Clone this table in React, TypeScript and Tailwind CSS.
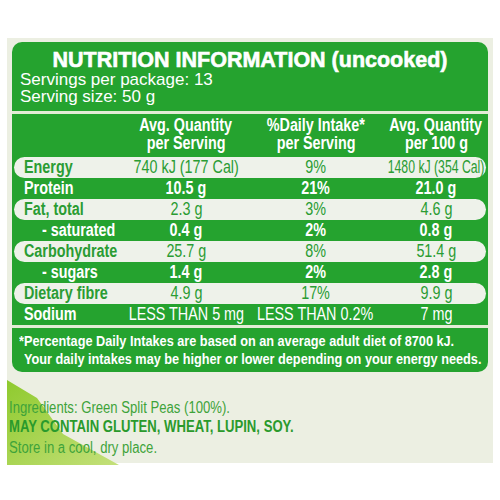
type Row = { label: string; a: string; b: string; c: string; indent?: boolean };

const rows: Row[] = [
  { label: "Energy", a: "740 kJ (177 Cal)", b: "9%", c: "1480 kJ (354 Cal)" },
  { label: "Protein", a: "10.5 g", b: "21%", c: "21.0 g" },
  { label: "Fat, total", a: "2.3 g", b: "3%", c: "4.6 g" },
  { label: "- saturated", a: "0.4 g", b: "2%", c: "0.8 g", indent: true },
  { label: "Carbohydrate", a: "25.7 g", b: "8%", c: "51.4 g" },
  { label: "- sugars", a: "1.4 g", b: "2%", c: "2.8 g", indent: true },
  { label: "Dietary fibre", a: "4.9 g", b: "17%", c: "9.9 g" },
];

// condensed look: Liberation Sans squeezed horizontally (no narrow face installed)
function Cond({ children, left, tight }: { children: React.ReactNode; left?: boolean; tight?: boolean }) {
  return (
    <span
      className={`inline-block whitespace-nowrap ${tight ? "scale-x-[0.7]" : "scale-x-[0.82]"} ${left ? "origin-left" : "origin-center"}`}
    >
      {children}
    </span>
  );
}

const cols = "grid grid-cols-[110px_124px_136px_104px] items-center";

function Cell({ children, tight }: { children: React.ReactNode; tight?: boolean }) {
  return (
    <div className="flex justify-center">
      <Cond tight={tight}>{children}</Cond>
    </div>
  );
}

function NutritionRow({ row, light }: { row: Row; light: boolean }) {
  return (
    <div
      className={
        light
          ? `mx-[2px] h-[21px] rounded-full bg-[#eef2ea] text-[#2a9c33] ${cols}`
          : `mx-[2px] h-[21px] text-white font-bold ${cols}`
      }
    >
      <div className={`font-bold ${row.indent ? "pl-[28px]" : "pl-[10px]"}`}>
        <Cond left>{row.label}</Cond>
      </div>
      <Cell>{row.a}</Cell>
      <Cell>{row.b}</Cell>
      <Cell tight={row.c.length > 10}>{row.c}</Cell>
    </div>
  );
}

export default function App() {
  return (
    <div className="w-[500px] h-[500px] bg-white pt-[38px] px-[7px] font-['Liberation_Sans',Arial,sans-serif]">
      <div className="h-[425px] bg-[#ecefe2] flex flex-col">
        {/* green panel */}
        <div className="mx-[5px] mt-[4px] rounded-[10px] bg-[#25a32f] overflow-hidden flex flex-col">
          {/* title + servings */}
          <div className="h-[69px] px-[8px] pt-[6px] text-white">
            <h1 className="text-center font-bold text-[21.5px] leading-[24px] [-webkit-text-stroke:0.6px_white]">
              NUTRITION INFORMATION (uncooked)
            </h1>
            <p className="text-[17px] leading-[17px] -mt-[1px]">Servings per package: 13</p>
            <p className="text-[17px] leading-[17px]">Serving size: 50 g</p>
          </div>
          <div className="h-[3px] bg-[#e3ecd6]" />

          {/* column headings */}
          <div className="h-[43px] pt-[2px] mx-[2px] grid grid-cols-[110px_124px_136px_104px] text-white font-bold text-[17.5px] leading-[18px]">
            <span />
            <div className="flex flex-col items-center">
              <Cond>Avg. Quantity</Cond>
              <Cond>per Serving</Cond>
            </div>
            <div className="flex flex-col items-center">
              <Cond>%Daily Intake*</Cond>
              <Cond>per Serving</Cond>
            </div>
            <div className="flex flex-col items-center">
              <Cond>Avg. Quantity</Cond>
              <Cond>per 100 g</Cond>
            </div>
          </div>

          {/* rows */}
          <div className="text-[17.5px] leading-[21px]">
            {rows.map((r, i) => (
              <NutritionRow key={r.label} row={r} light={i % 2 === 0} />
            ))}
            <div className={`mx-[2px] h-[21px] text-white ${cols}`}>
              <div className="font-bold pl-[10px]">
                <Cond left>Sodium</Cond>
              </div>
              <Cell>LESS THAN 5 mg</Cell>
              <div className="pl-[9px]">
                <Cond left>LESS THAN 0.2%</Cond>
              </div>
              <Cell>7 mg</Cell>
            </div>
          </div>
          <div className="h-[3px] bg-[#e3ecd6]" />

          {/* footnote */}
          <div className="h-[44px] pl-[7px] pt-[4px] text-white font-bold text-[15.5px] leading-[18px] flex flex-col">
            <Cond left>*Percentage Daily Intakes are based on an average adult diet of 8700 kJ.</Cond>
            <span className="pl-[5px]">
              <Cond left>Your daily intakes may be higher or lower depending on your energy needs.</Cond>
            </span>
          </div>
        </div>

        {/* ingredients */}
        <div className="relative flex-1">
          <svg className="absolute left-0 top-0" width="130" height="94" viewBox="0 0 130 94">
            <defs>
              <linearGradient id="lime" x1="0" y1="0" x2="1" y2="1">
                <stop offset="0" stopColor="#8fca2e" />
                <stop offset="1" stopColor="#c4e07a" />
              </linearGradient>
            </defs>
            <polygon points="0,8 30,26 56,62 112,93 0,93" fill="url(#lime)" />
          </svg>
          <div className="relative pt-[26px] pl-[2px] text-[16px] text-[#3ea33a] flex flex-col">
            <span className="leading-[19px]">
              <Cond left>Ingredients: Green Split Peas (100%).</Cond>
            </span>
            <span className="leading-[19px] font-bold text-[#2a9a2c]">
              <Cond left>MAY CONTAIN GLUTEN, WHEAT, LUPIN, SOY.</Cond>
            </span>
            <span className="leading-[23px]">
              <Cond left>Store in a cool, dry place.</Cond>
            </span>
          </div>
        </div>
      </div>
    </div>
  );
}
